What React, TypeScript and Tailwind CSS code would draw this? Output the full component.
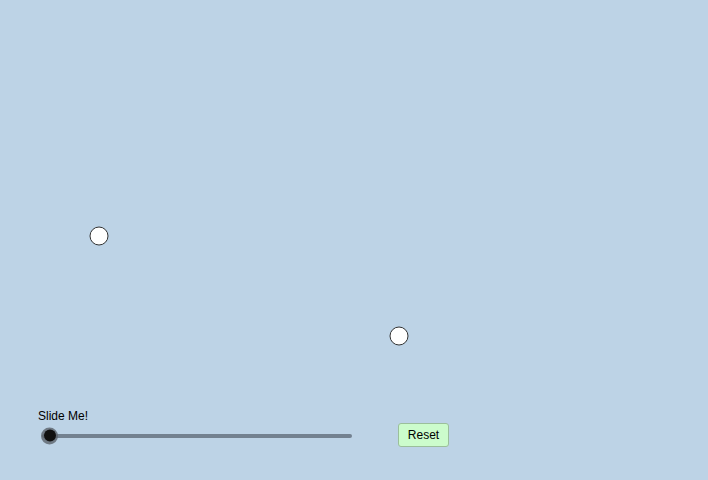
import React, { useState } from "react";

const points = [
  { id: "A", x: 99, y: 236 },
  { id: "B", x: 399, y: 336 },
];

export default function App() {
  const [value, setValue] = useState(0);

  return (
    <div
      className="relative flex h-[480px] w-full flex-col justify-end bg-[#bdd3e6] pb-[32px] pl-[38px]"
      style={{ fontFamily: '"Liberation Sans", Arial, sans-serif' }}
    >
      {points.map((p) => (
        <div
          key={p.id}
          className="absolute h-[19px] w-[19px] -translate-x-1/2 -translate-y-1/2 rounded-full border border-[#333] bg-white"
          style={{ left: p.x, top: p.y }}
        />
      ))}

      <div className="flex items-end">
        <div className="flex w-[316px] flex-col pb-[3px]">
          <span className="text-[12px] leading-none text-black">Slide Me!</span>
          <div className="relative mt-[4px] flex h-[19px] items-center">
            <div className="ml-[4px] h-[4px] w-[310px] rounded-full bg-[#738190]" />
            <div
              className="absolute top-1/2 flex h-[17px] w-[17px] -translate-y-1/2 items-center justify-center rounded-full bg-[#5b636b]/80"
              style={{ left: 3 + value * 3 }}
            >
              <div className="h-[12px] w-[12px] rounded-full bg-[#111]" />
            </div>
          </div>
        </div>

        <button
          onClick={() => setValue(0)}
          className="mb-[1px] ml-[44px] flex h-[24px] w-[51px] items-center justify-center rounded-[3px] border border-[#9bbf9b] bg-[#ccfccc] text-[12px] text-black"
        >
          Reset
        </button>
      </div>
    </div>
  );
}
